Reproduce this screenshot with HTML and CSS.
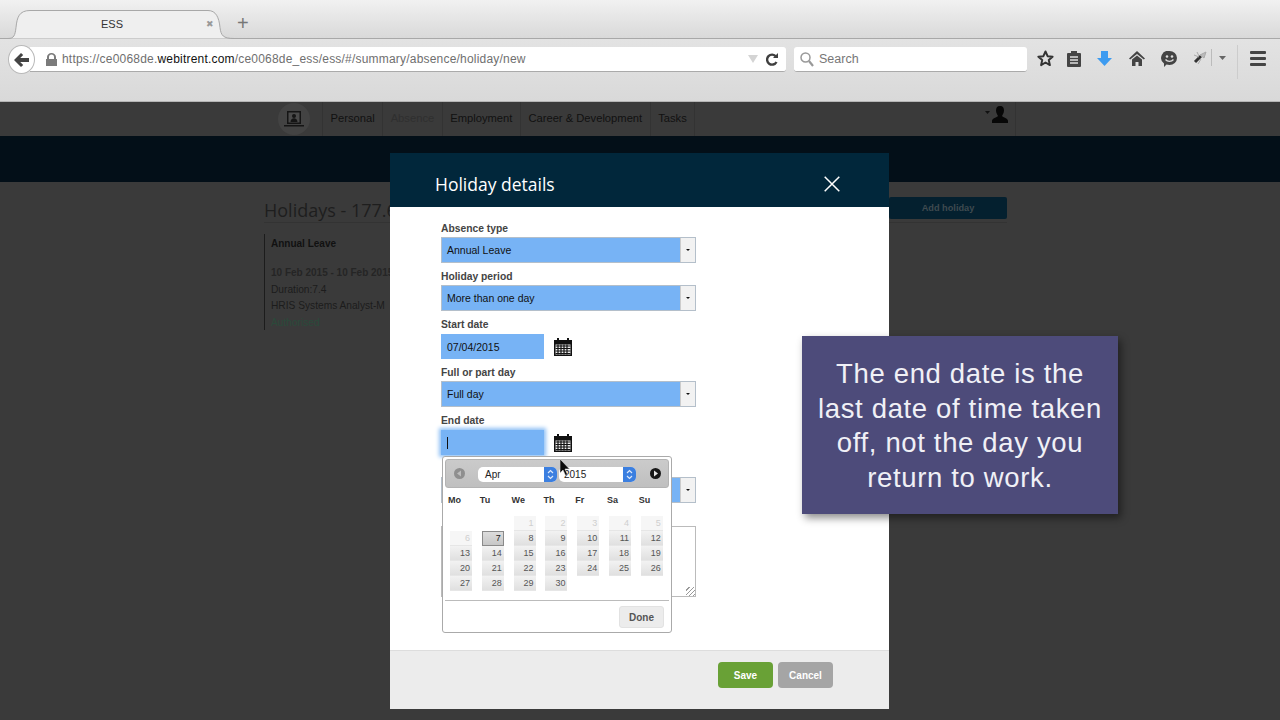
FILE: index.html
```html
<!DOCTYPE html>
<html lang="en">

<head>
    <meta charset="UTF-8" />
    <title>ESS</title>
    <link rel="stylesheet" href="styles.css">
</head>

<body>
    <svg class="defs" width="0" height="0">
        <symbol id="cal" viewBox="0 0 18 19">
            <path d="M0 3h3V1h2v2h8V1h2v2h3v16H0z" fill="#111" />
            <path d="M1.5 7.5h15v10h-15z" fill="#eee" />
            <path d="M1.5 9h15M1.5 11.5h15M1.5 14h15M1.5 16.5h15M4 7.5v10M7 7.5v10M10 7.5v10M13 7.5v10" stroke="#111" stroke-width="1.2" />
        </symbol>
        <symbol id="spin" viewBox="0 0 13 15">
            <path d="M4 6l2.500-2.500L9 6M4 9l2.500 2.500L9 9" fill="none" stroke="#dce8fa" stroke-width="1.2" />
        </symbol>
    </svg>

    <header class="chrome">
        <div class="tabbar">
            <div class="tab">
                <svg class="tab-shape" width="226" height="29" viewBox="0 0 226 29">
                    <path d="M0 28.5c6 0 7-3 8-11 1-10 3-17 14-17h178c8 0 11 7 12 17 1 8 3 11 14 11" fill="#efefef" stroke="#a8a8a8" />
                </svg>
                <span class="tab-title">ESS</span>
                <span class="tab-close">✖</span>
            </div>
            <span class="tab-new">+</span>
        </div>
        <div class="navbar">
            <div class="back">
                <svg width="15" height="14" viewBox="0 0 15 14"><path d="M7 0l2.200 2-3 3H15v4H6.200l3 3L7 14 0 7z" fill="#444" /></svg>
            </div>
            <div class="urlbar">
                <svg class="lock" width="11" height="13" viewBox="0 0 11 13"><path d="M1 6V4a4.500 4 0 0 1 9 0v2h1v7H0V6zm2 0h5V4a2.500 2.500 0 0 0-5 0z" fill="#7b7b7b" /></svg>
                <span class="url">https://ce0068de.<b>webitrent.com</b>/ce0068de_ess/ess/#/summary/absence/holiday/new</span>
                <svg class="url-drop" width="10" height="8" viewBox="0 0 10 8"><path d="M0 0h10L5 8z" fill="#d4d4d4" /></svg>
                <svg class="reload" width="12" height="13" viewBox="0 0 12 13"><path d="M10 3.500A5 5 0 1 0 10.500 9" fill="none" stroke="#3f3f3f" stroke-width="2.400" /><path d="M7 5h5V0z" fill="#3f3f3f" /></svg>
            </div>
            <div class="searchbar">
                <svg width="14" height="15" viewBox="0 0 14 15"><circle cx="5.500" cy="5.500" r="4.500" fill="none" stroke="#999" stroke-width="1.500" /><path d="M9 9l4 5" stroke="#999" stroke-width="2.200" /></svg>
                <span>Search</span>
            </div>
            <div class="tools">
                <svg class="tool-star" width="17" height="17" viewBox="0 0 17 17"><path d="M8.500 1.500l2.100 4.700 5 .5-3.800 3.400 1.100 5-4.400-2.600-4.400 2.600 1.100-5L1.400 6.700l5-.5z" fill="none" stroke="#333" stroke-width="2" stroke-linejoin="round" /></svg>
                <svg class="tool-clip" width="14" height="16" viewBox="0 0 14 16"><path d="M1 2h3V0h6v2h3a1 1 0 0 1 1 1v12a1 1 0 0 1-1 1H1a1 1 0 0 1-1-1V3a1 1 0 0 1 1-1z" fill="#444" /><path d="M3 6h8M3 9h8M3 12h8" stroke="#ddd" stroke-width="1.300" /></svg>
                <svg class="tool-down" width="15" height="15" viewBox="0 0 15 15"><path d="M4 0h7v7h4l-7.500 8L0 7h4z" fill="#3d9bf0" /></svg>
                <svg class="tool-home" width="16" height="15" viewBox="0 0 16 15"><path d="M8 0l8 7.500-1.200 1L8 3 1.200 8.500 0 7.500z" fill="#444" /><path d="M3 8.500L8 4.500l5 4V15H9.500v-4h-3v4H3z" fill="#444" /></svg>
                <svg class="tool-chat" width="17" height="16" viewBox="0 0 17 16"><path d="M8.500 0a7.500 7 0 0 1 0 14c-1 0-2 0-3-.4L3 16v-3.500A7 7 0 0 1 8.500 0z" fill="#444" /><circle cx="6" cy="5.500" r="1.300" fill="#ddd" /><circle cx="11" cy="5.500" r="1.300" fill="#ddd" /><path d="M4.500 8.500c2 2.500 6 2.500 8 0" fill="none" stroke="#ddd" stroke-width="1.300" /></svg>
                <svg class="tool-bug" width="15" height="14" viewBox="0 0 15 14"><path d="M3 11l6-6" stroke="#333" stroke-width="3" /><path d="M8 4l6-3-2 6zM2 4l5 2M5 1l2 4M6 13l3-5" stroke="#aaa" fill="#bbb" /></svg>
                <i class="tool-sep"></i>
                <svg class="tool-caret" width="7" height="4" viewBox="0 0 7 4"><path d="M0 0h7L3.500 4z" fill="#666" /></svg>
                <i class="tool-sep tool-sep-menu"></i>
                <div class="burger"><i></i><i></i><i></i></div>
            </div>
        </div>
    </header>

    <div class="app">
        <nav class="app-nav">
            <div class="avatar">
                <svg width="20" height="17" viewBox="0 0 20 17"><path d="M3 0h14v13H3z" fill="#151515" /><path d="M4.500 1.500h11v10h-11z" fill="#4a4a4a" /><circle cx="10" cy="5" r="2" fill="#151515" /><path d="M6.500 11c0-5 7-5 7 0zM0 14h20v1.500H0z" fill="#151515" /></svg>
            </div>
            <a class="nav-item">Personal</a>
            <a class="nav-item nav-off">Absence</a>
            <a class="nav-item">Employment</a>
            <a class="nav-item">Career &amp; Development</a>
            <a class="nav-item">Tasks</a>
            <div class="nav-user">
                <svg class="user-caret" width="5" height="3" viewBox="0 0 5 3"><path d="M0 0h5L2.500 3z" fill="#111" /></svg>
                <svg width="16" height="17" viewBox="0 0 16 17"><path d="M8 0c3 0 4 2 4 4.500S10.500 9 10 10c1 1.500 6 2 6 5v2H0v-2c0-3 5-3.500 6-5-.5-1-2-3-2-5.500S5 0 8 0z" fill="#070707" /></svg>
            </div>
        </nav>
        <div class="banner"></div>
        <main class="content">
            <div class="content-top">
                <h1>Holidays - 177.6</h1>
                <button class="add-btn">Add holiday</button>
            </div>
            <div class="leave-card">
                <h2>Annual Leave</h2>
                <p class="leave-dates">10 Feb 2015 - 10 Feb 2015</p>
                <p>Duration:7.4</p>
                <p>HRIS Systems Analyst-M</p>
                <p class="leave-status">Authorised</p>
            </div>
        </main>

        <section class="modal">
            <div class="modal-head">
                <h3>Holiday details</h3>
                <svg width="16" height="16" viewBox="0 0 16 16"><path d="M.7.7l14.600 14.600M15.300.7L.7 15.300" stroke="#fff" stroke-width="1.500" /></svg>
            </div>
            <div class="modal-body">
                <label>Absence type</label>
                <div class="select"><span>Annual Leave</span><i class="select-arrow"></i></div>
                <label>Holiday period</label>
                <div class="select"><span>More than one day</span><i class="select-arrow"></i></div>
                <label>Start date</label>
                <div class="date-row">
                    <div class="date-input">07/04/2015</div>
                    <svg class="cal-icon"><use href="#cal" /></svg>
                </div>
                <label>Full or part day</label>
                <div class="select"><span>Full day</span><i class="select-arrow"></i></div>
                <label>End date</label>
                <div class="date-row">
                    <div class="date-input date-focus"><i class="text-caret"></i></div>
                    <svg class="cal-icon"><use href="#cal" /></svg>
                </div>
                <label class="hidden-label">Time</label>
                <div class="select"><span></span><i class="select-arrow"></i></div>
                <label class="hidden-label">Comments</label>
                <div class="notes"></div>
            </div>
            <div class="modal-foot">
                <button class="btn btn-save">Save</button>
                <button class="btn btn-cancel">Cancel</button>
            </div>
        </section>

        <div class="datepicker">
            <div class="dp-head">
                <svg class="dp-nav dp-prev" viewBox="0 0 11 11"><circle cx="5.500" cy="5.500" r="5.500" fill="#8f8f8f" /><path d="M7 2.500v6L3 5.500z" fill="#bdbdbd" /></svg>
                <div class="dp-select dp-month"><span>Apr</span><svg class="dp-spin"><use href="#spin" /></svg></div>
                <div class="dp-select dp-year"><span>2015</span><svg class="dp-spin"><use href="#spin" /></svg></div>
                <svg class="dp-nav dp-next" viewBox="0 0 11 11"><circle cx="5.500" cy="5.500" r="5.500" fill="#181818" /><path d="M4 2.500v6l4-3z" fill="#e8e8e8" /></svg>
            </div>
            <div class="dp-grid dp-names">
                <b>Mo</b><b>Tu</b><b>We</b><b>Th</b><b>Fr</b><b>Sa</b><b>Su</b>
            </div>
            <div class="dp-grid dp-days">
                <span class="blank"></span><span class="blank"></span>
                <a class="off">1</a><a class="off">2</a><a class="off">3</a><a class="off">4</a><a class="off">5</a>
                <a class="off">6</a><a class="today">7</a><a>8</a><a>9</a><a>10</a><a>11</a><a>12</a>
                <a>13</a><a>14</a><a>15</a><a>16</a><a>17</a><a>18</a><a>19</a>
                <a>20</a><a>21</a><a>22</a><a>23</a><a>24</a><a>25</a><a>26</a>
                <a>27</a><a>28</a><a>29</a><a>30</a>
            </div>
            <div class="dp-foot"><button class="dp-done">Done</button></div>
        </div>

        <svg class="pointer" width="11" height="17" viewBox="0 0 11 17"><path d="M0 0v14l3-3 2.500 5.500 2-1L5 10h4.500z" fill="#0a0a0a" stroke="#ddd" stroke-width=".6" /></svg>

        <aside class="callout">The end date is the last date of time taken off, not the day you return to work.</aside>
    </div>
</body>

</html>
```

FILE: styles.css
```css
* {
    box-sizing: border-box;
}

html,
body {
    margin: 0;
    height: 720px;
    overflow: hidden;
}

body {
    font-family: "Liberation Sans", Arial, sans-serif;
    background-color: #3a3a3a;
}

.defs {
    position: absolute;
}

/* browser */
.chrome {
    height: 102px;
    background: linear-gradient(#e9e9e9, #d9d9d9);
    border-bottom: 1px solid #b5b5b5;
}

.tabbar {
    display: flex;
    align-items: flex-end;
    height: 39px;
    padding-left: 8px;
    background: linear-gradient(#f1f1f1, #d9d9d9);
    border-bottom: 1px solid #a8a8a8;
}

.tab {
    position: relative;
    width: 226px;
    height: 29px;
    margin-bottom: -1px;
    display: flex;
    align-items: center;
    font-size: 11px;
    color: #333;
}

.tab-shape {
    position: absolute;
    top: 0;
    left: 0;
}

.tab-title {
    position: relative;
    margin-left: 93px;
    margin-top: -2px;
}

.tab-close {
    position: relative;
    margin-left: 83px;
    margin-top: -2px;
    font-size: 9px;
    color: #999;
}

.tab-new {
    margin: 0 0 3px 3px;
    font-size: 20px;
    line-height: 24px;
    color: #777;
}

.navbar {
    display: flex;
    align-items: flex-start;
    height: 62px;
    padding: 8px 0 0 30px;
    position: relative;
}

.back {
    position: absolute;
    left: 8px;
    top: 6px;
    width: 27px;
    height: 29px;
    border-radius: 50%;
    background-color: #fff;
    border: 1px solid #b8b8b8;
    display: flex;
    align-items: center;
    justify-content: center;
    z-index: 1;
}

.urlbar {
    display: flex;
    align-items: center;
    width: 756px;
    height: 25px;
    padding: 0 8px 0 16px;
    background-color: #fff;
    border-bottom: 1px solid #aaa;
    border-radius: 0 3px 3px 0;
    font-size: 12px;
    color: #6f6f6f;
}

.url {
    margin-left: 5px;
    letter-spacing: .2px;
}

.url b {
    font-weight: normal;
    color: #111;
}

.url-drop {
    margin-left: auto;
    margin-right: 8px;
}

.searchbar {
    display: flex;
    align-items: center;
    gap: 5px;
    width: 233px;
    height: 25px;
    margin-left: 8px;
    padding-left: 6px;
    background-color: #fff;
    border-bottom: 1px solid #aaa;
    border-radius: 3px;
    font-size: 12.5px;
    color: #777;
}

.tools {
    position: relative;
    flex: 1;
    height: 30px;
}

.tools svg,
.tools .tool-sep,
.burger {
    position: absolute;
}

.tool-star { left: 10px; top: 3px; }
.tool-clip { left: 40px; top: 4px; }
.tool-down { left: 70px; top: 4px; }
.tool-home { left: 102px; top: 4px; }
.tool-chat { left: 134px; top: 4px; }
.tool-bug { left: 165px; top: 4px; }
.tool-caret { left: 192px; top: 9px; }

.tool-sep {
    left: 184px;
    top: 2px;
    width: 1px;
    height: 17px;
    background-color: #bbb;
}

.tools .tool-sep-menu {
    left: 210px;
    top: -2px;
    height: 34px;
    background-color: #ccc;
}

.burger {
    left: 223px;
    top: 4px;
    width: 16px;
    display: flex;
    flex-direction: column;
    gap: 3px;
}

.burger i {
    height: 3px;
    border-radius: 1px;
    background-color: #444;
}

/* page behind the dialog */
.app {
    position: relative;
    height: 618px;
    background-color: #3a3a3a;
}

.app-nav {
    display: flex;
    align-items: center;
    height: 34px;
    margin: 0 264px 0 278px;
    font-size: 11.2px;
    color: #111;
}

.avatar {
    display: flex;
    align-items: center;
    justify-content: center;
    width: 32px;
    height: 32px;
    margin-right: 12px;
    border-radius: 50%;
    background-color: #434343;
    flex: none;
}

.nav-item {
    display: flex;
    align-items: center;
    height: 34px;
    padding: 0 7.5px 2px;
    border-left: 1px solid #333;
    white-space: nowrap;
}

.nav-item:nth-child(6) {
    border-right: 1px solid #333;
}

.nav-off {
    color: #2f2f2f;
}

.nav-user {
    display: flex;
    align-items: flex-start;
    gap: 2px;
    height: 34px;
    margin-left: auto;
    padding: 4px 7px 0 0;
    border-right: 1px solid #333;
}

.user-caret {
    margin-top: 5px;
}

.banner {
    height: 46px;
    background-color: #030f18;
}

.content {
    margin: 0 273px 0 264px;
}

.content-top {
    display: flex;
    justify-content: space-between;
    align-items: flex-start;
    height: 41px;
    padding-top: 15px;
    border-bottom: 1px solid #333;
}

h1 {
    margin: 0;
    font-family: "Open Sans", sans-serif;
    font-size: 18px;
    font-weight: normal;
    line-height: 26px;
    color: #1e1e1e;
}

.add-btn {
    width: 118px;
    height: 22px;
    border: 0;
    border-radius: 2px;
    background-color: #04202f;
    font-family: inherit;
    font-size: 9.2px;
    font-weight: bold;
    color: #3f4a50;
    padding: 0;
}

.leave-card {
    margin-top: 11px;
    height: 96px;
    padding: 4px 6px;
    border-left: 1px solid #1c1c1c;
    font-size: 10.2px;
    color: #1c1c1c;
}

.leave-card h2 {
    margin: 0 0 15px;
    font-size: 10px;
    line-height: 12px;
    color: #111;
}

.leave-card p {
    margin: 0;
    line-height: 16.5px;
    white-space: nowrap;
}

.leave-card .leave-dates {
    font-size: 10px;
    font-weight: bold;
    color: #252525;
}

.leave-card .leave-status {
    color: #2a4a3a;
}

/* dialog */
.modal {
    position: absolute;
    top: 51px;
    left: 390px;
    width: 499px;
    height: 556px;
    display: flex;
    flex-direction: column;
    background-color: #fff;
}

.modal-head {
    display: flex;
    align-items: center;
    justify-content: space-between;
    flex: none;
    height: 54px;
    padding: 8px 49px 0 45px;
    background-color: #01273b;
}

.modal-head h3 {
    margin: 0;
    font-family: "Open Sans", sans-serif;
    font-size: 17.5px;
    font-weight: normal;
    color: #fff;
}

.modal-body {
    flex: 1;
    padding: 14px 0 0 51px;
}

.modal-body label {
    display: block;
    height: 16px;
    font-size: 10.3px;
    font-weight: bold;
    line-height: 15px;
    color: #444;
}

.select {
    display: flex;
    justify-content: space-between;
    align-items: center;
    width: 255px;
    height: 26px;
    margin-bottom: 6px;
    padding-left: 5px;
    background-color: #77b3f5;
    border: 1px solid #b4bfca;
    font-size: 10.5px;
    color: #111;
}

.select-arrow {
    position: relative;
    width: 15px;
    height: 100%;
    background-color: #f2f2f2;
    border-left: 1px solid #ccc;
}

.select-arrow::after {
    content: "";
    position: absolute;
    top: 11px;
    left: 5px;
    border: 2.5px solid transparent;
    border-top-color: #111;
}

.date-row {
    display: flex;
    align-items: center;
    gap: 10px;
    margin: 1px 0 6px;
}

.date-input {
    display: flex;
    align-items: center;
    width: 103px;
    height: 25px;
    padding-left: 6px;
    background-color: #77b3f5;
    font-size: 10.5px;
    color: #111;
}

.date-focus {
    box-shadow: 0 0 4px 2px #8fc0f5;
}

.text-caret {
    width: 1px;
    height: 12px;
    background-color: #111;
}

.cal-icon {
    width: 18px;
    height: 19px;
}

.hidden-label {
    visibility: hidden;
}

.notes {
    width: 255px;
    height: 71px;
    margin-top: 1px;
    border: 1px solid #bbb;
    background: repeating-linear-gradient(135deg, transparent 0 2px, #999 2px 3px) right bottom / 9px 9px no-repeat;
}

.modal-foot {
    display: flex;
    justify-content: flex-end;
    align-items: flex-start;
    gap: 5px;
    flex: none;
    height: 59px;
    padding: 11px 56px 0 0;
    background-color: #ececec;
    border-top: 1px solid #ddd;
}

.btn {
    width: 55px;
    height: 26px;
    padding: 0;
    border: 0;
    border-radius: 4px;
    font-family: inherit;
    font-size: 10px;
    font-weight: bold;
    color: #fff;
}

.btn-save {
    background-color: #69a136;
}

.btn-cancel {
    background-color: #a5a5a5;
}

/* calendar popup */
.datepicker {
    position: absolute;
    top: 354px;
    left: 442px;
    width: 230px;
    height: 177px;
    padding: 2px 2px;
    background-color: #fff;
    border: 1px solid #aaa;
    border-radius: 3px;
}

.dp-head {
    position: relative;
    height: 29px;
    background: linear-gradient(#cbcbcb, #bfbfbf);
    border: 1px solid #b3b3b3;
    border-radius: 3px;
}

.dp-nav {
    position: absolute;
    top: 8px;
    width: 11px;
    height: 11px;
}

.dp-prev {
    left: 8px;
}

.dp-next {
    right: 7px;
}

.dp-select {
    position: absolute;
    top: 7px;
    display: flex;
    align-items: center;
    height: 15px;
    background-color: #fff;
    border-radius: 5px;
    font-size: 10px;
    color: #222;
}

.dp-month {
    left: 32px;
    width: 79px;
    padding-left: 7px;
}

.dp-year {
    left: 113px;
    width: 77px;
    padding-left: 5px;
}

.dp-spin {
    position: absolute;
    right: 0;
    top: 0;
    width: 13px;
    height: 15px;
    background-color: #3b7fe0;
    border-radius: 0 5px 5px 0;
}

.dp-grid {
    display: grid;
    grid-template-columns: repeat(7, 22px);
    column-gap: 9.8px;
    font-size: 9px;
}

.dp-names {
    height: 28px;
    padding: 7px 0 0 2px;
    color: #333;
}

.dp-names b {
    padding-left: 1px;
}

.dp-days {
    grid-auto-rows: 15px;
    height: 84px;
    padding-left: 5px;
}

.dp-days a {
    padding-right: 2px;
    text-align: right;
    line-height: 15px;
    color: #555;
    background: linear-gradient(#f2f2f2, #e0e0e0);
    border-bottom: 1px solid #e6e6e6;
}

.dp-days a.off {
    color: #cfcfcf;
    background: #f6f6f6;
}

.dp-days a.today {
    background: linear-gradient(#ddd, #c6c6c6);
    border: 1px solid #8a8a8a;
    color: #222;
    line-height: 13px;
}

.dp-foot {
    display: flex;
    justify-content: flex-end;
    height: 32px;
    padding: 5px 5px 0 0;
    border-top: 1px solid #bbb;
}

.dp-done {
    width: 45px;
    height: 22px;
    padding: 0;
    background-color: #ececec;
    border: 1px solid #e2e2e2;
    border-radius: 3px;
    font-family: inherit;
    font-size: 10px;
    font-weight: bold;
    color: #555;
}

.pointer {
    position: absolute;
    top: 357px;
    left: 560px;
}

/* callout */
.callout {
    position: absolute;
    top: 234px;
    left: 802px;
    width: 316px;
    height: 178px;
    padding: 21px 10px 0;
    background-color: #4d4b7a;
    box-shadow: 3px 4px 8px rgba(0, 0, 0, 0.45);
    font-size: 27.5px;
    line-height: 34.7px;
    letter-spacing: .65px;
    text-align: center;
    color: #f0f0f6;
}
```
